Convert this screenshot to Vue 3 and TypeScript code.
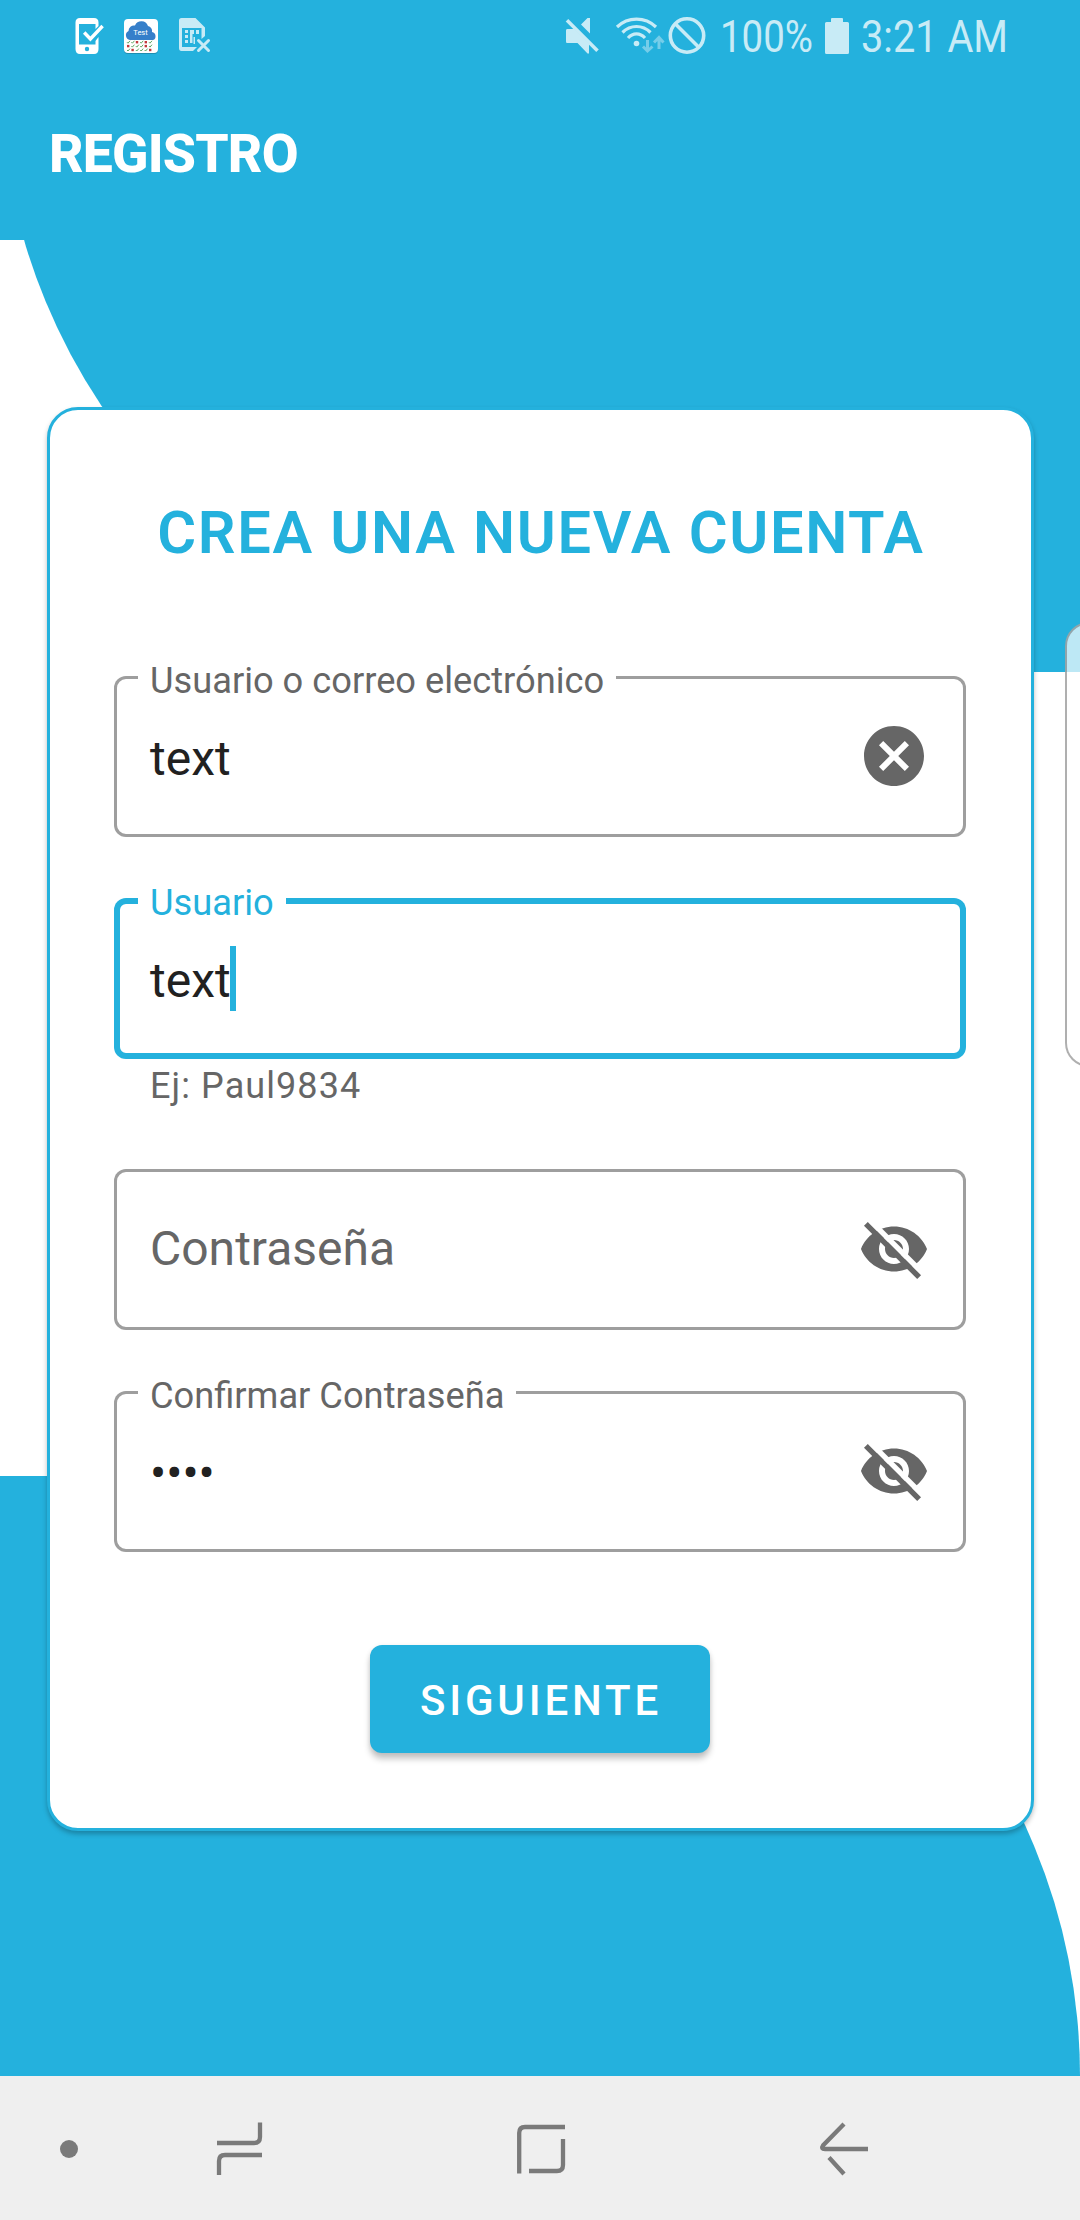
<script setup lang="ts">
interface Field {
  id: string
  label: string
  value: string
  focused?: boolean
  helper?: string
  icon?: 'clear' | 'hidden'
}

const fields: Field[] = [
  { id: 'email', label: 'Usuario o correo electrónico', value: 'text', icon: 'clear' },
  { id: 'user', label: 'Usuario', value: 'text', focused: true, helper: 'Ej: Paul9834' },
  { id: 'password', label: 'Contraseña', value: '', icon: 'hidden' },
  { id: 'confirm', label: 'Confirmar Contraseña', value: '••••', icon: 'hidden' },
]

const rain = Array.from({ length: 18 }, (_, i) => ({
  x: 4 + (i % 6) * 4.4,
  y: 23 + Math.floor(i / 6) * 3.9,
  red: [2, 4, 6, 10, 13, 17].includes(i),
}))
</script>

<template>
  <div class="screen">
    <div class="backdrop">
      <div class="curve curve-top"></div>
      <div class="curve curve-bottom"></div>
    </div>

    <header class="top">
      <div class="status">
        <div class="notices">
          <svg class="n-phone" width="30" height="38" viewBox="0 0 30 38">
            <path fill="#fff" fill-rule="evenodd" d="M5 1H19Q23.500 1 23.500 5.500V9L20.500 12V7H4V27.500H20.500V24L23.500 20V32Q23.500 37 19 37H5Q.5 37 .5 32V5.500Q.5 1 5 1ZM12 29.800a2.200 2.200 0 1 0 0 4.400a2.200 2.200 0 1 0 0-4.400Z" />
            <path fill="none" stroke="#fff" stroke-width="3.400" d="M9.200 15.500L15.400 22L27.600 9" />
          </svg>
          <svg class="n-test" width="36" height="38" viewBox="0 0 36 38">
            <rect x="1" y="3" width="34" height="34" rx="4" fill="#1b7795" opacity=".6" />
            <rect x="1" y="2" width="34" height="34" rx="4" fill="#fff" />
            <path fill="#357fca" d="M7 23a4.800 4.800 0 0 1-1.500-9a5.500 5.500 0 0 1 6.500-5.500a7 7 0 0 1 13 .5a5 5 0 0 1 4 6a4.200 4.200 0 0 1 1 8Z" />
            <text x="17.500" y="18" text-anchor="middle" font-size="7.500" fill="#fff">Test</text>
            <g v-for="(drop, i) in rain" :key="i">
              <rect v-if="drop.red" :x="drop.x" :y="drop.y + 1" width="2.400" height="2.400" fill="#c23a3e" />
              <path v-else fill="none" stroke="#4b9c50" stroke-width=".9" :d="`M${drop.x} ${drop.y + 2.200}l1 1l2-2.400`" />
            </g>
          </svg>
          <svg class="n-sim" width="34" height="38" viewBox="0 0 34 38">
            <path fill="#c8ebf6" d="M3.500 1H17.500L27 10.500V19L23.500 22V11H4V30H19L15 34H3.500Q1 34 1 31V3.500Q1 1 3.500 1Z" />
            <path fill="#c8ebf6" d="M7 13h3v3H7zM7 18h3v3H7zM7 23h3v3H7zM12 13h4v4h-1.500v9H12zM18 13h3v4h-3zM15.500 20h1.500v7h-1.500z" />
            <path stroke="#c8ebf6" stroke-width="3" stroke-linecap="round" d="M20.500 23.500L30.500 33.500M30.500 23.500L20.500 33.500" />
          </svg>
        </div>
        <div class="system">
          <svg width="36" height="40" viewBox="0 0 36 40" class="s-mute">
            <path fill="#c8ebf6" d="M2 13H9L24 28V37.500H22.500L12.500 27H2Q1 27 1 25.500V14.500Q1 13 2 13ZM16 8.500L22.500 2H25V17.500Z" />
            <path stroke="#24b1dd" stroke-width="3" d="M4.500 1.500L36 33" />
            <path stroke="#c8ebf6" stroke-width="3.600" d="M2 4.200L32.500 34.800" />
          </svg>
          <svg width="50" height="40" viewBox="0 0 50 40" class="s-wifi">
            <g fill="none" stroke="#c8ebf6" stroke-width="3.200">
              <path d="M2 11C13 .5 30 .5 41 11" />
              <path d="M7.500 16.500C15.500 8.500 27.500 8.500 35.500 16.500" />
              <path d="M13 22C18 16.500 25 16.500 30 22" />
            </g>
            <circle cx="21.500" cy="27.500" r="2.800" fill="#c8ebf6" />
            <g fill="none" stroke="#75cde9" stroke-width="3">
              <path d="M32.500 24V34.500M28 30.500L32.500 35L37.500 30.500M44 33V23M39 26.500L44 21.500L48.500 26.500" />
            </g>
          </svg>
          <svg width="40" height="40" viewBox="0 0 40 40" class="s-ban">
            <circle cx="20" cy="19.500" r="16.700" fill="none" stroke="#c8ebf6" stroke-width="3.600" />
            <path stroke="#c8ebf6" stroke-width="3.600" d="M8.500 8L31.500 31" />
          </svg>
          <svg class="s-percent" width="94" height="64" viewBox="0 0 94 64">
            <text x="0" y="49" font-size="45" fill="#c8ebf6" textLength="93" lengthAdjust="spacingAndGlyphs">100%</text>
          </svg>
          <svg class="s-battery" width="24" height="36" viewBox="0 0 24 36">
            <path fill="#c8ebf6" d="M7 0H17Q18 0 18 1V4H22.500Q24 4 24 5.500V34.500Q24 36 22.500 36H1.500Q0 36 0 34.500V5.500Q0 4 1.500 4H6V1Q6 0 7 0Z" />
          </svg>
          <svg class="s-time" width="148" height="64" viewBox="0 0 148 64">
            <text x="0" y="49" font-size="45" fill="#c8ebf6" textLength="147" lengthAdjust="spacingAndGlyphs">3:21 AM</text>
          </svg>
        </div>
      </div>
      <h1 class="bar-title">REGISTRO</h1>
    </header>

    <main class="card">
      <h2 class="heading">CREA UNA NUEVA CUENTA</h2>
      <div class="fields">
        <div v-for="f in fields" :key="f.id" class="group">
          <div class="field" :class="{ focused: f.focused }">
            <span v-if="f.value" class="label">{{ f.label }}</span>
            <span v-if="f.value" class="value">{{ f.value }}</span>
            <span v-else class="value placeholder">{{ f.label }}</span>
            <span v-if="f.focused" class="caret"></span>
            <svg v-if="f.icon === 'clear'" class="icon" viewBox="0 0 24 24">
              <path fill="#666" d="M12 2C6.470 2 2 6.470 2 12s4.470 10 10 10 10-4.470 10-10S17.530 2 12 2zm5 13.590L15.590 17 12 13.410 8.410 17 7 15.590 10.590 12 7 8.410 8.410 7 12 10.590 15.590 7 17 8.410 13.410 12 17 15.590z" />
            </svg>
            <svg v-if="f.icon === 'hidden'" class="icon" viewBox="0 0 24 24">
              <path fill="#666" d="M12 4.500C7 4.500 2.730 7.610 1 12c1.730 4.390 6 7.500 11 7.500s9.270-3.110 11-7.500c-1.730-4.390-6-7.500-11-7.500zM12 17c-2.760 0-5-2.240-5-5s2.240-5 5-5 5 2.240 5 5-2.240 5-5 5zm0-8c-1.660 0-3 1.340-3 3s1.340 3 3 3 3-1.340 3-3-1.340-3-3-3z" />
              <path stroke="#fff" stroke-width="1.800" d="M3 1.470L22 20.470" />
              <path stroke="#666" stroke-width="1.800" stroke-linecap="square" d="M3.270 4.270L19.740 20.740" />
            </svg>
          </div>
          <div v-if="f.helper" class="helper">{{ f.helper }}</div>
        </div>
      </div>
      <button class="submit" type="button">SIGUIENTE</button>
    </main>

    <div class="edge-panel"></div>

    <nav class="navbar">
      <svg width="1080" height="144" viewBox="0 0 1080 144" fill="none" stroke="#7a7a7a" stroke-width="4.300">
        <circle cx="69" cy="73" r="9" fill="#7a7a7a" stroke="none" />
        <path d="M260 46.500V61Q260 67 254 67H217M219 99V85Q219 79 225 79H262" />
        <path d="M519.200 97.500V57Q519.200 51 525 51H565M563 63V89Q563 95 557 95H529" />
        <path d="M844 48L823 69.500Q820.500 73 825 73H868M829 81.500L844 98" />
      </svg>
    </nav>
  </div>
</template>

<style>
body {
  margin: 0;
}
</style>

<style scoped>
.screen {
  position: relative;
  display: flex;
  flex-direction: column;
  width: 1080px;
  height: 2220px;
  overflow: hidden;
  background: #fff;
  font-family: Roboto, "Noto Sans", sans-serif;
}
.backdrop {
  position: absolute;
  inset: 0;
}
.curve {
  position: absolute;
  width: 1080px;
  height: 600px;
  background: #24b1dd;
}
.curve-top {
  top: 72px;
  border-bottom-left-radius: 600px;
}
.curve-bottom {
  top: 1476px;
  border-top-right-radius: 600px;
}
.top {
  position: relative;
  flex: none;
  height: 240px;
  background: #24b1dd;
}
.status {
  display: flex;
  justify-content: space-between;
  height: 72px;
  padding: 0 71px 0 75px;
  box-sizing: border-box;
}
.notices,
.system {
  display: flex;
  align-items: flex-start;
}
.notices svg {
  margin-top: 17px;
}
.n-test {
  margin-left: 18px;
}
.n-sim {
  margin-left: 19px;
}
.system svg {
  margin-top: 16px;
  flex: none;
  overflow: visible;
}
.s-wifi {
  margin-left: 14px;
}
.s-ban {
  margin-left: 2px;
}
.system .s-percent {
  margin: 3px 0 0 13px;
}
.system .s-battery {
  margin: 18px 12px 0 11px;
}
.system .s-time {
  margin-top: 3px;
}
.bar-title {
  margin: 48px 0 0 49px;
  color: #fff;
  font-size: 53.500px;
  font-weight: 800;
  line-height: 68px;
  letter-spacing: -0.8px;
}
.card {
  position: relative;
  flex: none;
  display: flex;
  flex-direction: column;
  align-items: center;
  box-sizing: border-box;
  width: 987px;
  height: 1424px;
  margin: 167px 0 0 47px;
  padding: 88px 65px 0 64px;
  border: 3px solid #24b1dd;
  border-radius: 31px;
  background: #fff;
  box-shadow: 0 3px 5px rgba(0, 0, 0, 0.26);
}
.heading {
  margin: 0 0 108px;
  padding-left: 2px;
  color: #24b1dd;
  font-size: 59.500px;
  font-weight: 600;
  line-height: 70px;
  letter-spacing: 1.650px;
  white-space: nowrap;
}
.fields {
  display: flex;
  flex-direction: column;
  gap: 61px;
  width: 100%;
}
.field {
  position: relative;
  display: flex;
  align-items: center;
  box-sizing: border-box;
  height: 161px;
  padding: 0 36px;
  border-radius: 12px;
  box-shadow: inset 0 0 0 3px #9e9e9e;
}
.field.focused {
  box-shadow: inset 0 0 0 6px #24b1dd;
}
.label {
  position: absolute;
  top: -16px;
  left: 24px;
  padding: 0 12px;
  background: #fff;
  color: #666;
  font-size: 36.240px;
  line-height: 42px;
  white-space: nowrap;
}
.focused .label {
  color: #24b1dd;
}
.value {
  padding-top: 4px;
  color: #212121;
  font-size: 48px;
  line-height: 56px;
}
.placeholder {
  padding: 0 0 2px;
  color: #666;
}
.caret {
  width: 6px;
  height: 65px;
  margin-left: -1px;
}
.focused .caret {
  background: #24b1dd;
}
.icon {
  width: 72px;
  height: 72px;
  margin: 0 0 1px auto;
}
.helper {
  height: 43px;
  padding: 6px 36px 0;
  color: #666;
  font-size: 36px;
  line-height: 43px;
  letter-spacing: 1.080px;
}
.submit {
  flex: none;
  width: 340px;
  height: 108px;
  margin-top: 93px;
  padding: 2px 0 0 2px;
  border: 0;
  border-radius: 12px;
  background: #24b1dd;
  box-shadow: 0 6px 6px rgba(0, 0, 0, 0.22), 0 1px 5px rgba(0, 0, 0, 0.08);
  color: #fff;
  font-family: inherit;
  font-size: 42px;
  font-weight: 500;
  letter-spacing: 3.850px;
}
.edge-panel {
  position: absolute;
  top: 622px;
  left: 1065px;
  box-sizing: border-box;
  width: 60px;
  height: 445px;
  border: 2px solid rgba(110, 110, 110, 0.55);
  border-radius: 24px;
  background: rgba(255, 255, 255, 0.7);
}
.navbar {
  position: relative;
  flex: none;
  height: 144px;
  margin-top: auto;
  background: #efefef;
}
.navbar svg {
  display: block;
}
</style>
